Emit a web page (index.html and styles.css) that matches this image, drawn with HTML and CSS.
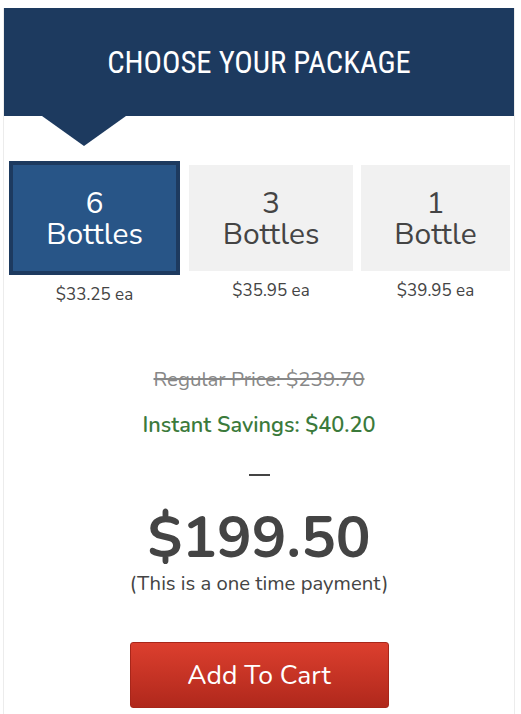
FILE: index.html
```html
<!DOCTYPE html>
<html>
<head>
<meta charset="utf-8">
<link rel="stylesheet" href="styles.css">
</head>
<body>
<div class="card">
  <div class="header"><h1 class="title">CHOOSE YOUR PACKAGE</h1></div>
  <div class="packages">
    <div class="pkg pkg-1">
      <div class="pkg-box selected"><span class="qty">6</span><span class="unit">Bottles</span></div>
      <div class="pkg-price">$33.25 ea</div>
    </div>
    <div class="pkg pkg-2">
      <div class="pkg-box"><span class="qty">3</span><span class="unit">Bottles</span></div>
      <div class="pkg-price">$35.95 ea</div>
    </div>
    <div class="pkg pkg-3">
      <div class="pkg-box"><span class="qty">1</span><span class="unit">Bottle</span></div>
      <div class="pkg-price">$39.95 ea</div>
    </div>
  </div>
  <div class="summary">
    <div class="regular">Regular Price: $239.70</div>
    <div class="savings">Instant Savings: $40.20</div>
    <div class="divider"></div>
    <div class="total">$199.50</div>
    <div class="note">(This is a one time payment)</div>
    <button class="cart-btn">Add To Cart</button>
  </div>
</div>
</body>
</html>
```
FILE: styles.css
```css
* { box-sizing: border-box; }
html, body { margin: 0; padding: 0; background: #fff; }
body { font-family: "Nunito", "Lato", "Open Sans", sans-serif; color: #444; }

.card {
  margin: 8px 0 0 3px;
  width: 512px;
  min-height: 720px;
  border-left: 1px solid #ececec;
  border-right: 1px solid #ececec;
}

.header {
  position: relative;
  height: 108px;
  background: #1d3a5f;
  display: flex;
  align-items: center;
  justify-content: center;
}
.header::after {
  content: "";
  position: absolute;
  top: 100%;
  left: 38px;
  width: 0;
  height: 0;
  border-top: 30px solid #1d3a5f;
  border-left: 42px solid transparent;
  border-right: 42px solid transparent;
}
.title {
  margin: 2px 0 0;
  font-family: "Roboto Condensed", "Roboto", sans-serif;
  font-weight: 400;
  font-size: 30.7px;
  color: #fff;
  line-height: 1;
}

.packages {
  display: flex;
  align-items: flex-start;
  margin-top: 45px;
  padding-left: 5px;
}
.pkg { display: flex; flex-direction: column; align-items: stretch; }
.pkg-1 { width: 171px; }
.pkg-2 { width: 164px; margin-left: 9px; }
.pkg-3 { width: 149px; margin-left: 8px; }

.pkg-box {
  height: 106px;
  margin-top: 4px;
  background: #f1f1f1;
  display: flex;
  flex-direction: column;
  align-items: center;
  justify-content: center;
  font-size: 30px;
  line-height: 31px;
  color: #444;
}
.pkg-box.selected {
  height: 114px;
  margin-top: 0;
  background: #285587;
  border: 4px solid #1d3a5f;
  color: #fff;
}
.qty { margin-top: 1px; }
.pkg-price {
  margin-top: 9px;
  text-align: center;
  font-size: 17px;
  line-height: 22px;
  color: #444;
}

.summary {
  display: flex;
  flex-direction: column;
  align-items: center;
  padding-top: 61px;
}
.regular {
  font-size: 20.5px;
  line-height: 24px;
  color: #888;
  text-decoration: line-through;
}
.savings {
  margin-top: 20px;
  font-size: 21.7px;
  line-height: 28px;
  font-weight: 600;
  color: #3b7a3b;
}
.divider {
  margin-top: 35px;
  width: 21px;
  height: 2px;
  background: #444;
}
.total {
  margin-top: 30px;
  font-size: 58px;
  line-height: 64px;
  font-weight: 700;
  color: #444;
}
.note {
  margin-top: 1px;
  font-size: 20.3px;
  line-height: 25px;
  color: #444;
}
.cart-btn {
  margin-top: 46px;
  width: 259px;
  height: 66px;
  border: 1px solid #a8261a;
  border-radius: 3px;
  background: linear-gradient(to bottom, #dc3f2e, #b0281c);
  color: #fff;
  font-family: inherit;
  font-size: 26.5px;
  cursor: pointer;
}
```
